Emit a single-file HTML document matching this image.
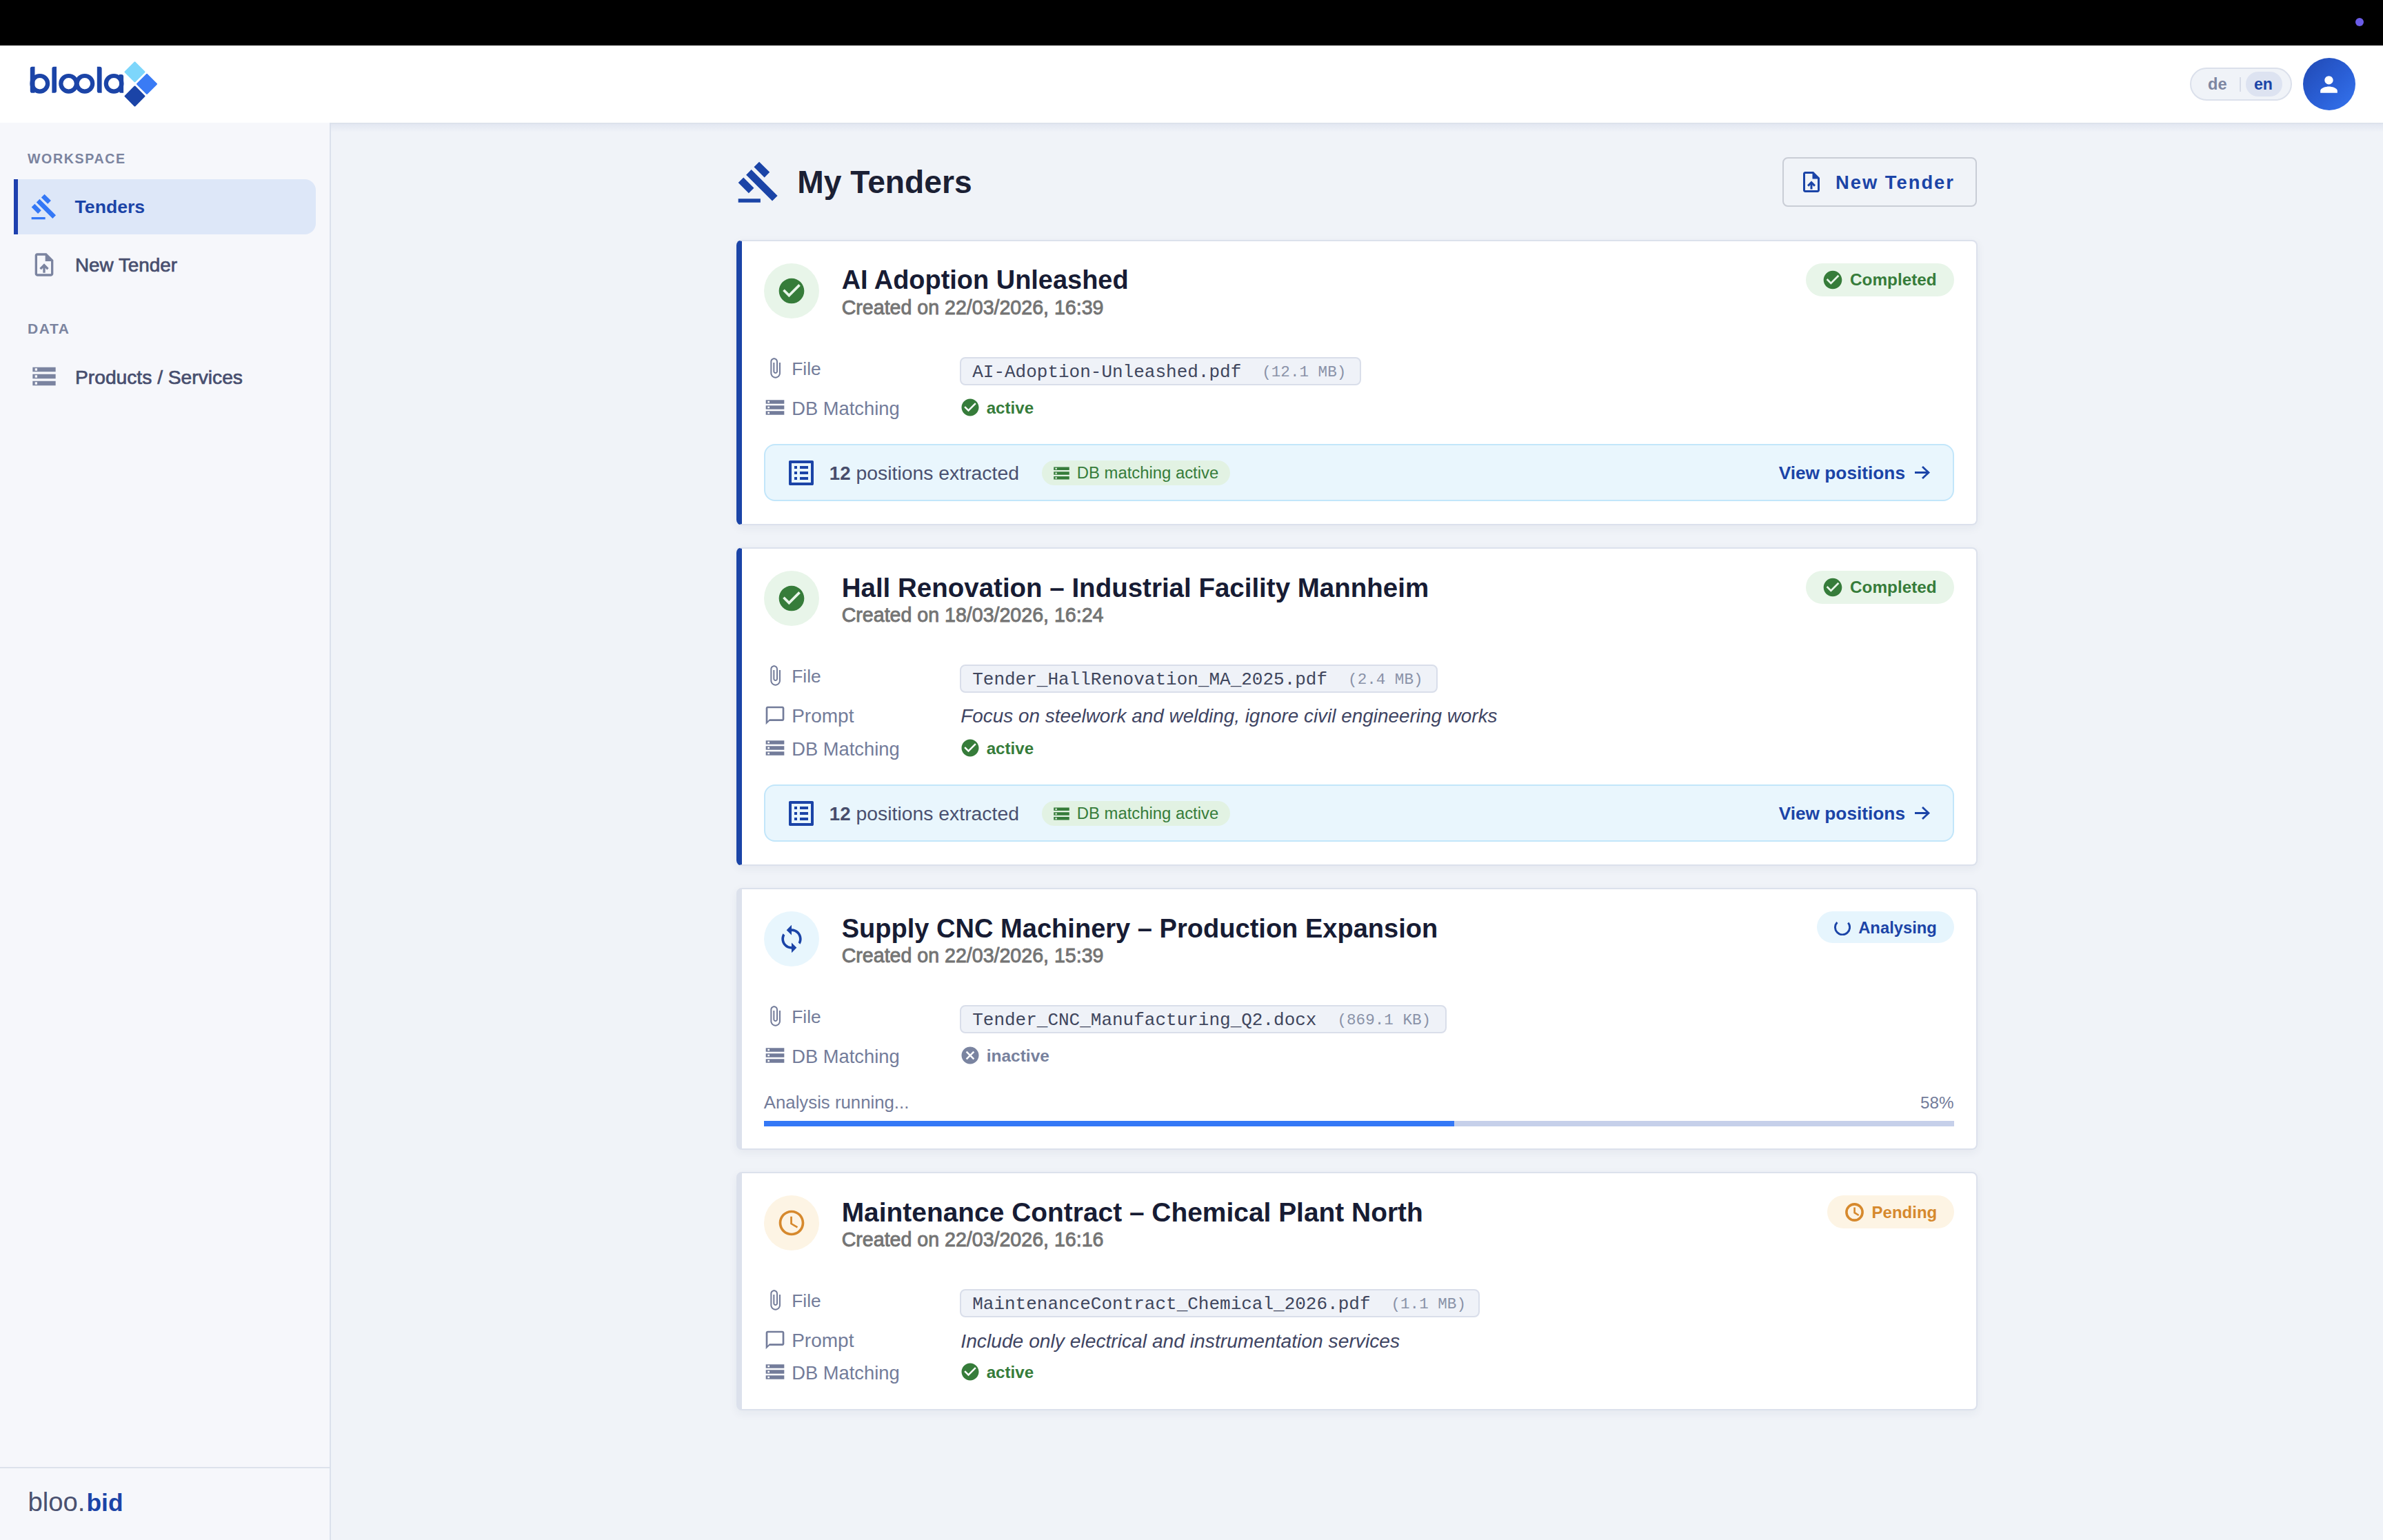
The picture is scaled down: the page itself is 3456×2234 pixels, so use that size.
<!DOCTYPE html>
<html><head><meta charset="utf-8"><title>My Tenders</title>
<style>
html,body{margin:0;padding:0;width:3456px;height:2234px;overflow:hidden;background:#eff2f8;font-family:'Liberation Sans', sans-serif}
</style></head><body>
<div style="position:absolute;left:0px;top:0px;width:3456px;height:66px;background:#000"></div>
<div style="position:absolute;left:3416px;top:26px;width:12px;height:12px;background:#6b5ce7;border-radius:50%"></div>
<div style="position:absolute;left:0px;top:66px;width:3456px;height:112px;background:#fff"></div>
<svg style="position:absolute;left:0;top:66px" width="260" height="112" viewBox="0 66 260 112">
<g fill="#1b44a7">
<path d="M43.8 99.5a2.8 2.8 0 0 1 2.8-2.8h3.9v38.1h-3.9a2.8 2.8 0 0 1-2.8-2.8z"/>
<circle cx="57.8" cy="121.3" r="11.3" fill="none" stroke="#1b44a7" stroke-width="6.2"/>
<path d="M75.4 99.5a2.8 2.8 0 0 1 2.8-2.8h3.8v35.3a2.8 2.8 0 0 1-2.8 2.8h-3.8z"/>
<circle cx="99.6" cy="121.3" r="11.3" fill="none" stroke="#1b44a7" stroke-width="6.2"/>
<circle cx="122.9" cy="121.3" r="11.3" fill="none" stroke="#1b44a7" stroke-width="6.2"/>
<path d="M140.8 96.7h3.8a3 3 0 0 1 3 3v35.1h-4a2.8 2.8 0 0 1-2.8-2.8z"/>
<circle cx="165.1" cy="121.3" r="11.3" fill="none" stroke="#1b44a7" stroke-width="6.2"/>
<path d="M172.9 108h3.3a2.9 2.9 0 0 1 2.9 2.9v23.9h-3.3a2.9 2.9 0 0 1-2.9-2.9z"/>
</g>
<g transform="translate(195.5 104.4) rotate(45)"><rect x="-10.95" y="-10.95" width="21.9" height="21.9" rx="1.2" fill="#7dd6fb"/></g>
<g transform="translate(213 121.9) rotate(45)"><rect x="-10.95" y="-10.95" width="21.9" height="21.9" rx="1.2" fill="#3a7bf5"/></g>
<g transform="translate(195.5 139.5) rotate(45)"><rect x="-10.95" y="-10.95" width="21.9" height="21.9" rx="1.2" fill="#1b44a7"/></g>
</svg>
<div style="position:absolute;left:3176px;top:98px;width:148px;height:48px;box-sizing:border-box;border:2px solid #dbe0eb;background:#f0f3f8;border-radius:24px"></div>
<div style="position:absolute;left:3248px;top:112px;width:2px;height:21px;background:#d7dce8"></div>
<div style="position:absolute;left:3257px;top:104px;width:53px;height:36px;background:#dde3f1;border-radius:18px"></div>
<div style="position:absolute;left:3340px;top:84px;width:76px;height:76px;border-radius:50%;background:linear-gradient(135deg,#2149b3 0%,#2a5fd6 55%,#3574ee 100%)"></div>
<svg style="position:absolute;left:3359px;top:103.5px;" width="37" height="37" viewBox="0 0 24 24"><path fill="#fff" d="M12 12c2.21 0 4-1.79 4-4s-1.79-4-4-4-4 1.79-4 4 1.79 4 4 4m0 2c-2.67 0-8 1.34-8 4v2h16v-2c0-2.66-5.33-4-8-4"/></svg>
<div style="position:absolute;left:0px;top:178px;width:478px;height:2056px;background:#f6f7fb"></div>
<div style="position:absolute;left:478px;top:178px;width:2px;height:2056px;background:#dbe1ec"></div>
<div style="position:absolute;left:20px;top:260px;width:438px;height:80px;background:#dde7f8;border-radius:0 16px 16px 0"></div>
<div style="position:absolute;left:20px;top:260px;width:6px;height:80px;background:#1e40af"></div>
<svg style="position:absolute;left:44.3px;top:280.1px;" width="40" height="40" viewBox="0 0 24 24"><path fill="#3478f6" d="M1 21h12v2H1zM5.245 8.07l2.83-2.827 14.14 14.142-2.828 2.828zM12.317 1l5.657 5.656-2.83 2.83-5.654-5.66zM3.825 9.485l5.657 5.657-2.828 2.828-5.657-5.657z"/></svg>
<svg style="position:absolute;left:44.2px;top:363.6px;" width="40" height="40" viewBox="0 0 24 24"><path fill="#7b84a0" d="M14 2H6c-1.1 0-1.99.9-1.99 2L4 20c0 1.1.89 2 1.99 2H18c1.1 0 2-.9 2-2V8zm4 18H6V4h7v5h5zM8 15.01l1.41 1.41L11 14.84V19h2v-4.16l1.59 1.59L16 15.01 12.01 11z"/></svg>
<svg style="position:absolute;left:43.6px;top:526.3px;" width="40" height="40" viewBox="0 0 24 24"><path fill="#7b84a0" d="M2 20h20v-4H2zm2-3h2v2H4zM2 4v4h20V4zm4 3H4V5h2zm-4 7h20v-4H2zm2-3h2v2H4z"/></svg>
<div style="position:absolute;left:0px;top:2128px;width:478px;height:2px;background:#dde2ec"></div>
<div style="position:absolute;left:480px;top:178px;width:2976px;height:2056px;background:#f0f3f8"></div>
<div style="position:absolute;left:480px;top:178px;width:2976px;height:2px;background:#dde2ec"></div>
<div style="position:absolute;left:480px;top:180px;width:2976px;height:12px;background:linear-gradient(180deg,rgba(210,217,234,0.45),rgba(240,243,248,0))"></div>
<svg style="position:absolute;left:1068px;top:231.6px;" width="64.4" height="64.4" viewBox="0 0 24 24"><path fill="#1b44a7" d="M1 21h12v2H1zM5.245 8.07l2.83-2.827 14.14 14.142-2.828 2.828zM12.317 1l5.657 5.656-2.83 2.83-5.654-5.66zM3.825 9.485l5.657 5.657-2.828 2.828-5.657-5.657z"/></svg>
<div style="position:absolute;left:2585px;top:228px;width:282px;height:72px;box-sizing:border-box;border:2px solid #c9cdd6;border-radius:8px"></div>
<svg style="position:absolute;left:2609px;top:245.7px;" width="36" height="36" viewBox="0 0 24 24"><path fill="#1b44a7" d="M14 2H6c-1.1 0-1.99.9-1.99 2L4 20c0 1.1.89 2 1.99 2H18c1.1 0 2-.9 2-2V8zm4 18H6V4h7v5h5zM8 15.01l1.41 1.41L11 14.84V19h2v-4.16l1.59 1.59L16 15.01 12.01 11z"/></svg>
<div style="position:absolute;left:1068px;top:348px;width:1800px;height:414px;box-sizing:border-box;background:#fff;border:2px solid #dce1ec;border-left:8px solid #1b44a7;border-radius:8px;box-shadow:0 4px 14px rgba(30,45,90,0.06)"></div>
<div style="position:absolute;left:1108px;top:382px;width:80px;height:80px;background:#e8f5e9;border-radius:50%"></div>
<svg style="position:absolute;left:1126px;top:400px;" width="44" height="44" viewBox="0 0 24 24"><path fill="#367c3a" d="M12 2C6.48 2 2 6.48 2 12s4.48 10 10 10 10-4.48 10-10S17.52 2 12 2m-2 15-5-5 1.41-1.41L10 14.17l7.59-7.59L19 8z"/></svg>
<div style="position:absolute;left:2619px;top:382px;width:215px;height:48px;background:#e8f5e9;border-radius:24px"></div>
<svg style="position:absolute;left:2642.3px;top:390px;" width="32" height="32" viewBox="0 0 24 24"><path fill="#367c3a" d="M12 2C6.48 2 2 6.48 2 12s4.48 10 10 10 10-4.48 10-10S17.52 2 12 2m-2 15-5-5 1.41-1.41L10 14.17l7.59-7.59L19 8z"/></svg>
<svg style="position:absolute;left:1108px;top:518px;" width="32" height="32" viewBox="0 0 24 24"><path fill="#737c9a" d="M16.5 6v11.5c0 2.21-1.79 4-4 4s-4-1.79-4-4V5c0-1.38 1.12-2.5 2.5-2.5s2.5 1.12 2.5 2.5v10.5c0 .55-.45 1-1 1s-1-.45-1-1V6H10v9.5c0 1.38 1.12 2.5 2.5 2.5s2.5-1.12 2.5-2.5V5c0-2.21-1.79-4-4-4S7 2.79 7 5v12.5c0 3.04 2.46 5.5 5.5 5.5s5.5-2.46 5.5-5.5V6z"/></svg>
<div style="position:absolute;left:1392px;top:518px;width:582px;height:41px;box-sizing:border-box;background:#eff2f8;border:2px solid #d9deea;border-radius:8px"></div>
<svg style="position:absolute;left:1108px;top:574.9px;" width="32" height="32" viewBox="0 0 24 24"><path fill="#737c9a" d="M2 20h20v-4H2zm2-3h2v2H4zM2 4v4h20V4zm4 3H4V5h2zm-4 7h20v-4H2zm2-3h2v2H4z"/></svg>
<svg style="position:absolute;left:1392.1px;top:576.1px;" width="30" height="30" viewBox="0 0 24 24"><path fill="#367c3a" d="M12 2C6.48 2 2 6.48 2 12s4.48 10 10 10 10-4.48 10-10S17.52 2 12 2m-2 15-5-5 1.41-1.41L10 14.17l7.59-7.59L19 8z"/></svg>
<div style="position:absolute;left:1108px;top:643.5px;width:1726px;height:83px;box-sizing:border-box;background:#e9f6fd;border:2px solid #c2e6fa;border-radius:16px"></div>
<svg style="position:absolute;left:1137.6px;top:662.0px;" width="48" height="48" viewBox="0 0 24 24"><path fill="#1b44a7" d="M19 5v14H5V5zm1.1-2H3.9c-.5 0-.9.4-.9.9v16.2c0 .4.4.9.9.9h16.2c.4 0 .9-.5.9-.9V3.9c0-.5-.5-.9-.9-.9M11 7h6v2h-6zm0 4h6v2h-6zm0 4h6v2h-6zM7 7h2v2H7zm0 4h2v2H7zm0 4h2v2H7z"/></svg>
<div style="position:absolute;left:1511px;top:668.0px;width:273px;height:36px;background:#e2f2e3;border-radius:18px"></div>
<svg style="position:absolute;left:1526.4px;top:673.0px;" width="27" height="27" viewBox="0 0 24 24"><path fill="#367c3a" d="M2 20h20v-4H2zm2-3h2v2H4zM2 4v4h20V4zm4 3H4V5h2zm-4 7h20v-4H2zm2-3h2v2H4z"/></svg>
<svg style="position:absolute;left:2772px;top:672.5px" width="30" height="24" viewBox="0 0 30 24"><path d="M5 12.5H25M16 4l9 8.5-9 8.5" fill="none" stroke="#1b44a7" stroke-width="2.8"/></svg>
<div style="position:absolute;left:1068px;top:794px;width:1800px;height:462px;box-sizing:border-box;background:#fff;border:2px solid #dce1ec;border-left:8px solid #1b44a7;border-radius:8px;box-shadow:0 4px 14px rgba(30,45,90,0.06)"></div>
<div style="position:absolute;left:1108px;top:828px;width:80px;height:80px;background:#e8f5e9;border-radius:50%"></div>
<svg style="position:absolute;left:1126px;top:846px;" width="44" height="44" viewBox="0 0 24 24"><path fill="#367c3a" d="M12 2C6.48 2 2 6.48 2 12s4.48 10 10 10 10-4.48 10-10S17.52 2 12 2m-2 15-5-5 1.41-1.41L10 14.17l7.59-7.59L19 8z"/></svg>
<div style="position:absolute;left:2619px;top:828px;width:215px;height:48px;background:#e8f5e9;border-radius:24px"></div>
<svg style="position:absolute;left:2642.3px;top:836px;" width="32" height="32" viewBox="0 0 24 24"><path fill="#367c3a" d="M12 2C6.48 2 2 6.48 2 12s4.48 10 10 10 10-4.48 10-10S17.52 2 12 2m-2 15-5-5 1.41-1.41L10 14.17l7.59-7.59L19 8z"/></svg>
<svg style="position:absolute;left:1108px;top:964px;" width="32" height="32" viewBox="0 0 24 24"><path fill="#737c9a" d="M16.5 6v11.5c0 2.21-1.79 4-4 4s-4-1.79-4-4V5c0-1.38 1.12-2.5 2.5-2.5s2.5 1.12 2.5 2.5v10.5c0 .55-.45 1-1 1s-1-.45-1-1V6H10v9.5c0 1.38 1.12 2.5 2.5 2.5s2.5-1.12 2.5-2.5V5c0-2.21-1.79-4-4-4S7 2.79 7 5v12.5c0 3.04 2.46 5.5 5.5 5.5s5.5-2.46 5.5-5.5V6z"/></svg>
<div style="position:absolute;left:1392px;top:964px;width:693px;height:41px;box-sizing:border-box;background:#eff2f8;border:2px solid #d9deea;border-radius:8px"></div>
<svg style="position:absolute;left:1108px;top:1022.0px;" width="32" height="32" viewBox="0 0 24 24"><path fill="#737c9a" d="M20 2H4c-1.1 0-2 .9-2 2v18l4-4h14c1.1 0 2-.9 2-2V4c0-1.1-.9-2-2-2m0 14H6l-2 2V4h16z"/></svg>
<svg style="position:absolute;left:1108px;top:1069px;" width="32" height="32" viewBox="0 0 24 24"><path fill="#737c9a" d="M2 20h20v-4H2zm2-3h2v2H4zM2 4v4h20V4zm4 3H4V5h2zm-4 7h20v-4H2zm2-3h2v2H4z"/></svg>
<svg style="position:absolute;left:1392.1px;top:1070.2px;" width="30" height="30" viewBox="0 0 24 24"><path fill="#367c3a" d="M12 2C6.48 2 2 6.48 2 12s4.48 10 10 10 10-4.48 10-10S17.52 2 12 2m-2 15-5-5 1.41-1.41L10 14.17l7.59-7.59L19 8z"/></svg>
<div style="position:absolute;left:1108px;top:1137.5px;width:1726px;height:83px;box-sizing:border-box;background:#e9f6fd;border:2px solid #c2e6fa;border-radius:16px"></div>
<svg style="position:absolute;left:1137.6px;top:1156.0px;" width="48" height="48" viewBox="0 0 24 24"><path fill="#1b44a7" d="M19 5v14H5V5zm1.1-2H3.9c-.5 0-.9.4-.9.9v16.2c0 .4.4.9.9.9h16.2c.4 0 .9-.5.9-.9V3.9c0-.5-.5-.9-.9-.9M11 7h6v2h-6zm0 4h6v2h-6zm0 4h6v2h-6zM7 7h2v2H7zm0 4h2v2H7zm0 4h2v2H7z"/></svg>
<div style="position:absolute;left:1511px;top:1162.0px;width:273px;height:36px;background:#e2f2e3;border-radius:18px"></div>
<svg style="position:absolute;left:1526.4px;top:1167.0px;" width="27" height="27" viewBox="0 0 24 24"><path fill="#367c3a" d="M2 20h20v-4H2zm2-3h2v2H4zM2 4v4h20V4zm4 3H4V5h2zm-4 7h20v-4H2zm2-3h2v2H4z"/></svg>
<svg style="position:absolute;left:2772px;top:1166.5px" width="30" height="24" viewBox="0 0 30 24"><path d="M5 12.5H25M16 4l9 8.5-9 8.5" fill="none" stroke="#1b44a7" stroke-width="2.8"/></svg>
<div style="position:absolute;left:1068px;top:1288px;width:1800px;height:380px;box-sizing:border-box;background:#fff;border:2px solid #dce1ec;border-left:8px solid #dce1ec;border-radius:8px;box-shadow:0 4px 14px rgba(30,45,90,0.06)"></div>
<div style="position:absolute;left:1108px;top:1322px;width:80px;height:80px;background:#e8f6fd;border-radius:50%"></div>
<svg style="position:absolute;left:1126px;top:1340px;" width="44" height="44" viewBox="0 0 24 24"><path fill="#1b44a7" d="M12 4V1L8 5l4 4V6c3.31 0 6 2.69 6 6 0 1.01-.25 1.97-.7 2.8l1.46 1.46C19.54 15.03 20 13.57 20 12c0-4.42-3.58-8-8-8m0 14c-3.31 0-6-2.69-6-6 0-1.01.25-1.97.7-2.8L5.24 7.74C4.46 8.97 4 10.43 4 12c0 4.42 3.58 8 8 8v3l4-4-4-4z"/></svg>
<div style="position:absolute;left:2635px;top:1322px;width:199px;height:46px;background:#e6f5fd;border-radius:23px"></div>
<svg style="position:absolute;left:2660px;top:1333px" width="24" height="24" viewBox="0 0 24 24"><path d="M4.4 4.9 A10.6 10.6 0 1 0 20.3 5.6" fill="none" stroke="#1b44a7" stroke-width="2.9"/></svg>
<svg style="position:absolute;left:1108px;top:1458px;" width="32" height="32" viewBox="0 0 24 24"><path fill="#737c9a" d="M16.5 6v11.5c0 2.21-1.79 4-4 4s-4-1.79-4-4V5c0-1.38 1.12-2.5 2.5-2.5s2.5 1.12 2.5 2.5v10.5c0 .55-.45 1-1 1s-1-.45-1-1V6H10v9.5c0 1.38 1.12 2.5 2.5 2.5s2.5-1.12 2.5-2.5V5c0-2.21-1.79-4-4-4S7 2.79 7 5v12.5c0 3.04 2.46 5.5 5.5 5.5s5.5-2.46 5.5-5.5V6z"/></svg>
<div style="position:absolute;left:1392px;top:1458px;width:706px;height:41px;box-sizing:border-box;background:#eff2f8;border:2px solid #d9deea;border-radius:8px"></div>
<svg style="position:absolute;left:1108px;top:1515px;" width="32" height="32" viewBox="0 0 24 24"><path fill="#737c9a" d="M2 20h20v-4H2zm2-3h2v2H4zM2 4v4h20V4zm4 3H4V5h2zm-4 7h20v-4H2zm2-3h2v2H4z"/></svg>
<svg style="position:absolute;left:1392.1px;top:1516.2px;" width="30" height="30" viewBox="0 0 24 24"><path fill="#7a84a0" d="M12 2C6.47 2 2 6.47 2 12s4.47 10 10 10 10-4.47 10-10S17.53 2 12 2m5 13.59L15.59 17 12 13.41 8.41 17 7 15.59 10.59 12 7 8.41 8.41 7 12 10.59 15.59 7 17 8.41 13.41 12z"/></svg>
<div style="position:absolute;left:1108px;top:1626px;width:1726px;height:8px;background:#c6d0ea"></div>
<div style="position:absolute;left:1108px;top:1626px;width:1001px;height:8px;background:#3478f6"></div>
<div style="position:absolute;left:1068px;top:1700px;width:1800px;height:346px;box-sizing:border-box;background:#fff;border:2px solid #dce1ec;border-left:8px solid #dce1ec;border-radius:8px;box-shadow:0 4px 14px rgba(30,45,90,0.06)"></div>
<div style="position:absolute;left:1108px;top:1734px;width:80px;height:80px;background:#fdf4e4;border-radius:50%"></div>
<svg style="position:absolute;left:1126px;top:1752px;" width="44" height="44" viewBox="0 0 24 24"><path fill="#d6892d" d="M11.99 2C6.47 2 2 6.48 2 12s4.47 10 9.99 10C17.52 22 22 17.52 22 12S17.52 2 11.99 2M12 20c-4.42 0-8-3.58-8-8s3.58-8 8-8 8 3.58 8 8-3.58 8-8 8m.5-13H11v6l5.25 3.15.75-1.23-4.5-2.67z"/></svg>
<div style="position:absolute;left:2650px;top:1734px;width:184px;height:48px;background:#fdf4e4;border-radius:24px"></div>
<svg style="position:absolute;left:2676px;top:1744.5px" width="27" height="27" viewBox="0 0 27 27"><circle cx="13.5" cy="13.5" r="11.6" fill="none" stroke="#d6892d" stroke-width="3.6"/><path d="M13.6 6.5V14.2L19.7 18" fill="none" stroke="#d6892d" stroke-width="2.6"/></svg>
<svg style="position:absolute;left:1108px;top:1870px;" width="32" height="32" viewBox="0 0 24 24"><path fill="#737c9a" d="M16.5 6v11.5c0 2.21-1.79 4-4 4s-4-1.79-4-4V5c0-1.38 1.12-2.5 2.5-2.5s2.5 1.12 2.5 2.5v10.5c0 .55-.45 1-1 1s-1-.45-1-1V6H10v9.5c0 1.38 1.12 2.5 2.5 2.5s2.5-1.12 2.5-2.5V5c0-2.21-1.79-4-4-4S7 2.79 7 5v12.5c0 3.04 2.46 5.5 5.5 5.5s5.5-2.46 5.5-5.5V6z"/></svg>
<div style="position:absolute;left:1392px;top:1870px;width:754px;height:41px;box-sizing:border-box;background:#eff2f8;border:2px solid #d9deea;border-radius:8px"></div>
<svg style="position:absolute;left:1108px;top:1928.1000000000001px;" width="32" height="32" viewBox="0 0 24 24"><path fill="#737c9a" d="M20 2H4c-1.1 0-2 .9-2 2v18l4-4h14c1.1 0 2-.9 2-2V4c0-1.1-.9-2-2-2m0 14H6l-2 2V4h16z"/></svg>
<svg style="position:absolute;left:1108px;top:1974px;" width="32" height="32" viewBox="0 0 24 24"><path fill="#737c9a" d="M2 20h20v-4H2zm2-3h2v2H4zM2 4v4h20V4zm4 3H4V5h2zm-4 7h20v-4H2zm2-3h2v2H4z"/></svg>
<svg style="position:absolute;left:1392.1px;top:1975.2px;" width="30" height="30" viewBox="0 0 24 24"><path fill="#367c3a" d="M12 2C6.48 2 2 6.48 2 12s4.48 10 10 10 10-4.48 10-10S17.52 2 12 2m-2 15-5-5 1.41-1.41L10 14.17l7.59-7.59L19 8z"/></svg>
<div style="position:absolute;left:3202.00px;top:110.98px;font-family:'Liberation Sans', sans-serif;font-size:23.65px;font-weight:700;color:#7d86a1;line-height:1;white-space:nowrap;">de</div>
<div style="position:absolute;left:3269.00px;top:111.41px;font-family:'Liberation Sans', sans-serif;font-size:23.13px;font-weight:700;color:#1b44a7;line-height:1;white-space:nowrap;">en</div>
<div style="position:absolute;left:40.00px;top:221.40px;font-family:'Liberation Sans', sans-serif;font-size:19.61px;font-weight:700;color:#7b849f;line-height:1;white-space:nowrap;letter-spacing:1.6px;">WORKSPACE</div>
<div style="position:absolute;left:108.60px;top:287.46px;font-family:'Liberation Sans', sans-serif;font-size:26.62px;font-weight:700;color:#1b44a7;line-height:1;white-space:nowrap;">Tenders</div>
<div style="position:absolute;left:109.00px;top:371.44px;font-family:'Liberation Sans', sans-serif;font-size:27.83px;font-weight:400;color:#474e6e;line-height:1;white-space:nowrap;-webkit-text-stroke:0.7px #474e6e;">New Tender</div>
<div style="position:absolute;left:40.00px;top:466.22px;font-family:'Liberation Sans', sans-serif;font-size:20.99px;font-weight:700;color:#7b849f;line-height:1;white-space:nowrap;letter-spacing:1.6px;">DATA</div>
<div style="position:absolute;left:109.00px;top:533.12px;font-family:'Liberation Sans', sans-serif;font-size:28.21px;font-weight:400;color:#474e6e;line-height:1;white-space:nowrap;-webkit-text-stroke:0.7px #474e6e;">Products / Services</div>
<div style="position:absolute;left:40.50px;top:2159.60px;font-family:'Liberation Sans', sans-serif;font-size:38.27px;font-weight:400;color:#4a5170;line-height:1;white-space:nowrap;">bloo.</div>
<div style="position:absolute;left:125.50px;top:2162.08px;font-family:'Liberation Sans', sans-serif;font-size:35.34px;font-weight:700;color:#1b44a7;line-height:1;white-space:nowrap;">bid</div>
<div style="position:absolute;left:1156.30px;top:241.45px;font-family:'Liberation Sans', sans-serif;font-size:46.23px;font-weight:700;color:#1b2034;line-height:1;white-space:nowrap;">My Tenders</div>
<div style="position:absolute;left:2662.00px;top:251.34px;font-family:'Liberation Sans', sans-serif;font-size:27.35px;font-weight:700;color:#1b44a7;line-height:1;white-space:nowrap;letter-spacing:2px;">New Tender</div>
<div style="position:absolute;left:1220.70px;top:388.37px;font-family:'Liberation Sans', sans-serif;font-size:37.95px;font-weight:700;color:#171c34;line-height:1;white-space:nowrap;">AI Adoption Unleashed</div>
<div style="position:absolute;left:1220.70px;top:432.29px;font-family:'Liberation Sans', sans-serif;font-size:28.59px;font-weight:400;color:#747474;line-height:1;white-space:nowrap;-webkit-text-stroke:0.9px #747474;">Created on 22/03/2026, 16:39</div>
<div style="position:absolute;left:2683.00px;top:393.90px;font-family:'Liberation Sans', sans-serif;font-size:24.33px;font-weight:700;color:#367c3a;line-height:1;white-space:nowrap;">Completed</div>
<div style="position:absolute;left:1148.20px;top:521.97px;font-family:'Liberation Sans', sans-serif;font-size:26.37px;font-weight:400;color:#737c9a;line-height:1;white-space:nowrap;">File</div>
<div style="position:absolute;left:1410.20px;top:526.58px;font-family:'Liberation Mono', monospace;font-size:26.00px;font-weight:400;color:#40465d;line-height:1;white-space:nowrap;">AI-Adoption-Unleashed.pdf</div>
<div style="position:absolute;left:1830.26px;top:529.19px;font-family:'Liberation Mono', monospace;font-size:22.60px;font-weight:400;color:#8a92a8;line-height:1;white-space:nowrap;">(12.1 MB)</div>
<div style="position:absolute;left:1148.20px;top:578.75px;font-family:'Liberation Sans', sans-serif;font-size:27.34px;font-weight:400;color:#737c9a;line-height:1;white-space:nowrap;">DB Matching</div>
<div style="position:absolute;left:1430.70px;top:579.65px;font-family:'Liberation Sans', sans-serif;font-size:24.16px;font-weight:700;color:#367c3a;line-height:1;white-space:nowrap;">active</div>
<div style="position:absolute;left:1202.80px;top:672.56px;font-family:'Liberation Sans', sans-serif;font-size:27.69px;font-weight:700;color:#474d6b;line-height:1;white-space:nowrap;">12</div>
<div style="position:absolute;left:1241.50px;top:671.98px;font-family:'Liberation Sans', sans-serif;font-size:28.36px;font-weight:400;color:#4a5070;line-height:1;white-space:nowrap;">positions extracted</div>
<div style="position:absolute;left:1561.80px;top:673.80px;font-family:'Liberation Sans', sans-serif;font-size:23.85px;font-weight:400;color:#367c3a;line-height:1;white-space:nowrap;">DB matching active</div>
<div style="position:absolute;left:2579.70px;top:672.98px;font-family:'Liberation Sans', sans-serif;font-size:26.25px;font-weight:700;color:#1b44a7;line-height:1;white-space:nowrap;">View positions</div>
<div style="position:absolute;left:1220.70px;top:833.90px;font-family:'Liberation Sans', sans-serif;font-size:38.51px;font-weight:700;color:#171c34;line-height:1;white-space:nowrap;">Hall Renovation – Industrial Facility Mannheim</div>
<div style="position:absolute;left:1220.70px;top:878.29px;font-family:'Liberation Sans', sans-serif;font-size:28.59px;font-weight:400;color:#747474;line-height:1;white-space:nowrap;-webkit-text-stroke:0.9px #747474;">Created on 18/03/2026, 16:24</div>
<div style="position:absolute;left:2683.00px;top:839.90px;font-family:'Liberation Sans', sans-serif;font-size:24.33px;font-weight:700;color:#367c3a;line-height:1;white-space:nowrap;">Completed</div>
<div style="position:absolute;left:1148.20px;top:967.97px;font-family:'Liberation Sans', sans-serif;font-size:26.37px;font-weight:400;color:#737c9a;line-height:1;white-space:nowrap;">File</div>
<div style="position:absolute;left:1410.20px;top:972.58px;font-family:'Liberation Mono', monospace;font-size:26.00px;font-weight:400;color:#40465d;line-height:1;white-space:nowrap;">Tender_HallRenovation_MA_2025.pdf</div>
<div style="position:absolute;left:1955.08px;top:975.19px;font-family:'Liberation Mono', monospace;font-size:22.60px;font-weight:400;color:#8a92a8;line-height:1;white-space:nowrap;">(2.4 MB)</div>
<div style="position:absolute;left:1148.20px;top:1024.59px;font-family:'Liberation Sans', sans-serif;font-size:28.00px;font-weight:400;color:#737c9a;line-height:1;white-space:nowrap;">Prompt</div>
<div style="position:absolute;left:1393.30px;top:1024.68px;font-family:'Liberation Sans', sans-serif;font-size:27.90px;font-weight:400;color:#3f4563;line-height:1;white-space:nowrap;font-style:italic;">Focus on steelwork and welding, ignore civil engineering works</div>
<div style="position:absolute;left:1148.20px;top:1072.85px;font-family:'Liberation Sans', sans-serif;font-size:27.34px;font-weight:400;color:#737c9a;line-height:1;white-space:nowrap;">DB Matching</div>
<div style="position:absolute;left:1430.70px;top:1073.75px;font-family:'Liberation Sans', sans-serif;font-size:24.16px;font-weight:700;color:#367c3a;line-height:1;white-space:nowrap;">active</div>
<div style="position:absolute;left:1202.80px;top:1166.56px;font-family:'Liberation Sans', sans-serif;font-size:27.69px;font-weight:700;color:#474d6b;line-height:1;white-space:nowrap;">12</div>
<div style="position:absolute;left:1241.50px;top:1165.98px;font-family:'Liberation Sans', sans-serif;font-size:28.36px;font-weight:400;color:#4a5070;line-height:1;white-space:nowrap;">positions extracted</div>
<div style="position:absolute;left:1561.80px;top:1167.80px;font-family:'Liberation Sans', sans-serif;font-size:23.85px;font-weight:400;color:#367c3a;line-height:1;white-space:nowrap;">DB matching active</div>
<div style="position:absolute;left:2579.70px;top:1166.98px;font-family:'Liberation Sans', sans-serif;font-size:26.25px;font-weight:700;color:#1b44a7;line-height:1;white-space:nowrap;">View positions</div>
<div style="position:absolute;left:1220.70px;top:1328.27px;font-family:'Liberation Sans', sans-serif;font-size:38.06px;font-weight:700;color:#171c34;line-height:1;white-space:nowrap;">Supply CNC Machinery – Production Expansion</div>
<div style="position:absolute;left:1220.70px;top:1372.29px;font-family:'Liberation Sans', sans-serif;font-size:28.59px;font-weight:400;color:#747474;line-height:1;white-space:nowrap;-webkit-text-stroke:0.9px #747474;">Created on 22/03/2026, 15:39</div>
<div style="position:absolute;left:2695.20px;top:1334.14px;font-family:'Liberation Sans', sans-serif;font-size:23.81px;font-weight:700;color:#1b44a7;line-height:1;white-space:nowrap;">Analysing</div>
<div style="position:absolute;left:1148.20px;top:1461.97px;font-family:'Liberation Sans', sans-serif;font-size:26.37px;font-weight:400;color:#737c9a;line-height:1;white-space:nowrap;">File</div>
<div style="position:absolute;left:1410.20px;top:1466.58px;font-family:'Liberation Mono', monospace;font-size:26.00px;font-weight:400;color:#40465d;line-height:1;white-space:nowrap;">Tender_CNC_Manufacturing_Q2.docx</div>
<div style="position:absolute;left:1939.48px;top:1469.19px;font-family:'Liberation Mono', monospace;font-size:22.60px;font-weight:400;color:#8a92a8;line-height:1;white-space:nowrap;">(869.1 KB)</div>
<div style="position:absolute;left:1148.20px;top:1518.85px;font-family:'Liberation Sans', sans-serif;font-size:27.34px;font-weight:400;color:#737c9a;line-height:1;white-space:nowrap;">DB Matching</div>
<div style="position:absolute;left:1430.70px;top:1519.76px;font-family:'Liberation Sans', sans-serif;font-size:24.50px;font-weight:700;color:#77819d;line-height:1;white-space:nowrap;">inactive</div>
<div style="position:absolute;left:1107.80px;top:1587.18px;font-family:'Liberation Sans', sans-serif;font-size:25.77px;font-weight:400;color:#737c9a;line-height:1;white-space:nowrap;">Analysis running...</div>
<div style="position:absolute;right:622.50px;top:1587.88px;font-family:'Liberation Sans', sans-serif;font-size:24.23px;font-weight:400;color:#737c9a;line-height:1;white-space:nowrap;">58%</div>
<div style="position:absolute;left:1220.70px;top:1739.54px;font-family:'Liberation Sans', sans-serif;font-size:38.92px;font-weight:700;color:#171c34;line-height:1;white-space:nowrap;">Maintenance Contract – Chemical Plant North</div>
<div style="position:absolute;left:1220.70px;top:1784.29px;font-family:'Liberation Sans', sans-serif;font-size:28.59px;font-weight:400;color:#747474;line-height:1;white-space:nowrap;-webkit-text-stroke:0.9px #747474;">Created on 22/03/2026, 16:16</div>
<div style="position:absolute;left:2714.60px;top:1746.77px;font-family:'Liberation Sans', sans-serif;font-size:24.01px;font-weight:700;color:#d6892d;line-height:1;white-space:nowrap;">Pending</div>
<div style="position:absolute;left:1148.20px;top:1873.97px;font-family:'Liberation Sans', sans-serif;font-size:26.37px;font-weight:400;color:#737c9a;line-height:1;white-space:nowrap;">File</div>
<div style="position:absolute;left:1410.20px;top:1878.58px;font-family:'Liberation Mono', monospace;font-size:26.00px;font-weight:400;color:#40465d;line-height:1;white-space:nowrap;">MaintenanceContract_Chemical_2026.pdf</div>
<div style="position:absolute;left:2017.49px;top:1881.19px;font-family:'Liberation Mono', monospace;font-size:22.60px;font-weight:400;color:#8a92a8;line-height:1;white-space:nowrap;">(1.1 MB)</div>
<div style="position:absolute;left:1148.20px;top:1930.69px;font-family:'Liberation Sans', sans-serif;font-size:28.00px;font-weight:400;color:#737c9a;line-height:1;white-space:nowrap;">Prompt</div>
<div style="position:absolute;left:1393.30px;top:1930.50px;font-family:'Liberation Sans', sans-serif;font-size:28.23px;font-weight:400;color:#3f4563;line-height:1;white-space:nowrap;font-style:italic;">Include only electrical and instrumentation services</div>
<div style="position:absolute;left:1148.20px;top:1977.85px;font-family:'Liberation Sans', sans-serif;font-size:27.34px;font-weight:400;color:#737c9a;line-height:1;white-space:nowrap;">DB Matching</div>
<div style="position:absolute;left:1430.70px;top:1978.75px;font-family:'Liberation Sans', sans-serif;font-size:24.16px;font-weight:700;color:#367c3a;line-height:1;white-space:nowrap;">active</div>
</body></html>
